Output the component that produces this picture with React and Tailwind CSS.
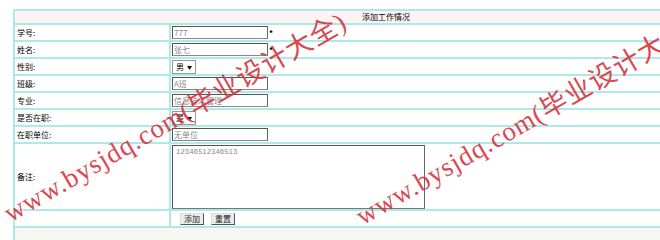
import React from "react";

const CJK = { fontFamily: '"Noto Sans CJK SC", "Noto Sans", sans-serif' };

function Row({ label, h = "h-[17px]", children }) {
  return (
    <div className={`flex ${h} border-b-2 border-[#aee8e8]`}>
      <div className="w-[156px] shrink-0 border-r-2 border-[#aee8e8] flex items-center pl-[2px] text-[8px] text-black">
        {label}
      </div>
      <div className="flex-1 flex items-center pl-[1px]">{children}</div>
    </div>
  );
}

function Input({ value, star }) {
  return (
    <div className="flex items-center">
      <div className="w-[96px] h-[13px] border border-t-[#555] border-l-[#555] border-r-[#666] border-b-[#888] bg-white flex items-center pl-[1px] text-[8px] leading-none text-[#888]">
        {value}
      </div>
      {star && <span className="text-[8px] leading-none text-black ml-[1px] font-bold">*</span>}
    </div>
  );
}

function Select({ value }) {
  return (
    <div className="w-[24px] h-[14px] border border-[#999] bg-white flex items-center pl-[3px] gap-[3px] text-[8px] leading-none text-black">
      <span>{value}</span>
      <span className="text-[5px]">▼</span>
    </div>
  );
}

function Btn({ label }) {
  return (
    <div className="h-[12px] px-[3px] border border-t-[#ddd] border-l-[#ddd] border-r-[#555] border-b-[#555] bg-[#ececec] flex items-center text-[8px] leading-none text-[#222]">
      {label}
    </div>
  );
}

export default function App() {
  return (
    <div className="relative w-[660px] h-[240px] overflow-hidden bg-white" style={CJK}>
      <div className="pl-[13px] pt-[9px]">
        <div className="w-[744px] border-t-2 border-l-2 border-[#aee8e8]">
          <div className="h-[14px] border-b-2 border-[#aee8e8] bg-[#fcf4f4] flex items-center justify-center text-[8px] text-black">
            添加工作情况
          </div>
          <Row label="学号:"><Input value="777" star /></Row>
          <Row label="姓名:"><Input value="张七" star /></Row>
          <Row label="性别:"><Select value="男" /></Row>
          <Row label="班级:"><Input value="A班" /></Row>
          <Row label="专业:"><Input value="信息技术管理" /></Row>
          <Row label="是否在职:"><Select value="是" /></Row>
          <Row label="在职单位:"><Input value="无单位" /></Row>
          <Row label="备注:" h="h-[67px]">
            <div
              className="w-[253px] h-[64px] border border-t-[#555] border-l-[#555] border-r-[#666] border-b-[#777] bg-white text-[7.3px] text-[#888] pl-[3px] pt-[3px] leading-none self-start mt-[1px]"
              style={{ fontFamily: '"Liberation Mono", monospace' }}
            >
              12346512346513
            </div>
          </Row>
          <Row label="">
            <div className="flex gap-[7px] pl-[8px]">
              <Btn label="添加" />
              <Btn label="重置" />
            </div>
          </Row>
          <div className="h-[20px] bg-[#f7f7f2]"></div>
        </div>
      </div>

      <div
        className="absolute left-[6px] top-[199px] h-[32px] flex items-center whitespace-nowrap text-[27px] text-[#d8343f] opacity-90 origin-left -rotate-[30deg] tracking-[1px]"
        style={{ fontFamily: '"Liberation Serif", "Noto Sans CJK SC", serif' }}
      >
        www.bysjdq.com(毕业设计大全)
      </div>
      <div
        className="absolute left-[358px] top-[202px] h-[32px] flex items-center whitespace-nowrap text-[27px] text-[#d8343f] opacity-90 origin-left -rotate-[30deg] tracking-[1px]"
        style={{ fontFamily: '"Liberation Serif", "Noto Sans CJK SC", serif' }}
      >
        www.bysjdq.com(毕业设计大全)
      </div>
    </div>
  );
}
